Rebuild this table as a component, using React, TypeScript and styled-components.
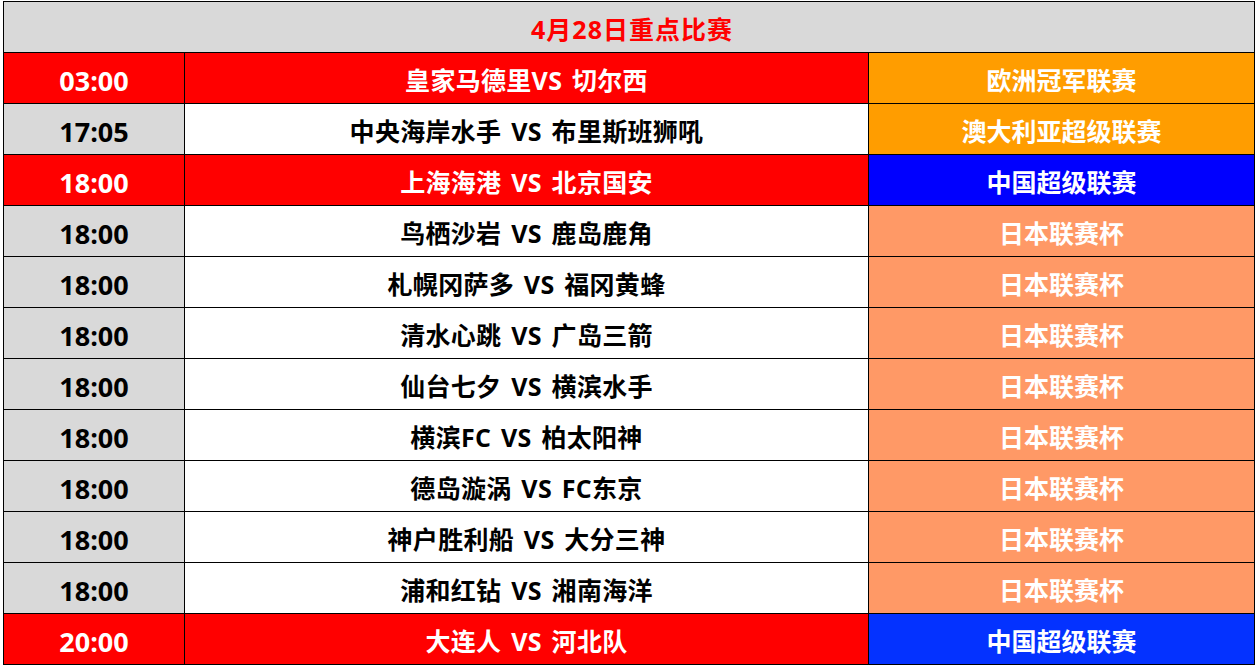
import React from "react";
import styled, { createGlobalStyle } from "styled-components";

const Global = createGlobalStyle`
  html, body { margin: 0; padding: 0; background: #ffffff; }
  body { padding: 1px 0 0 3px; }
  * { box-sizing: border-box; }
`;

const Table = styled.div`
  display: grid;
  grid-template-columns: 181px 684px 386px;
  grid-auto-rows: 51px;
  width: 1252px;
  border-top: 1px solid #000;
  border-left: 1px solid #000;
  font-family: "Open Sans", "Noto Sans CJK SC", sans-serif;
  font-weight: 700;
`;

const Cell = styled.div<{ $bg: string; $fg: string }>`
  display: flex;
  align-items: center;
  justify-content: center;
  padding-top: 5px;
  background: ${(p) => p.$bg};
  color: ${(p) => p.$fg};
  border-right: 1px solid #000;
  border-bottom: 1px solid #000;
  font-size: 25px;
  white-space: pre;
  line-height: 1;
`;

const TimeCell = styled(Cell)`
  font-size: 27px;
`;

const MatchCell = styled(Cell)`
  word-spacing: 3px;
  letter-spacing: 0.3px;
`;

const Header = styled(Cell)`
  grid-column: 1 / span 3;
  font-size: 25px;
  padding-top: 4px;
  padding-left: 6px;
  letter-spacing: 1px;
`;

type Row = { time: string; match: string; league: string; hot: boolean; lc: string };

const ORANGE = "#FF9D00";
const SALMON = "#FF9966";
const BLUE1 = "#0000FF";
const BLUE2 = "#0432FF";

const rows: Row[] = [
  { time: "03:00", match: "皇家马德里VS 切尔西", league: "欧洲冠军联赛", hot: true, lc: ORANGE },
  { time: "17:05", match: "中央海岸水手 VS 布里斯班狮吼", league: "澳大利亚超级联赛", hot: false, lc: ORANGE },
  { time: "18:00", match: "上海海港 VS 北京国安", league: "中国超级联赛", hot: true, lc: BLUE1 },
  { time: "18:00", match: "鸟栖沙岩 VS 鹿岛鹿角", league: "日本联赛杯", hot: false, lc: SALMON },
  { time: "18:00", match: "札幌冈萨多 VS 福冈黄蜂", league: "日本联赛杯", hot: false, lc: SALMON },
  { time: "18:00", match: "清水心跳 VS 广岛三箭", league: "日本联赛杯", hot: false, lc: SALMON },
  { time: "18:00", match: "仙台七夕 VS 横滨水手", league: "日本联赛杯", hot: false, lc: SALMON },
  { time: "18:00", match: "横滨FC VS 柏太阳神", league: "日本联赛杯", hot: false, lc: SALMON },
  { time: "18:00", match: "德岛漩涡 VS FC东京", league: "日本联赛杯", hot: false, lc: SALMON },
  { time: "18:00", match: "神户胜利船 VS 大分三神", league: "日本联赛杯", hot: false, lc: SALMON },
  { time: "18:00", match: "浦和红钻 VS 湘南海洋", league: "日本联赛杯", hot: false, lc: SALMON },
  { time: "20:00", match: "大连人 VS 河北队", league: "中国超级联赛", hot: true, lc: BLUE2 },
];

export default function App() {
  return (
    <>
      <Global />
      <Table>
        <Header $bg="#D9D9D9" $fg="#FF0000">4月28日重点比赛</Header>
        {rows.map((r, i) => (
          <React.Fragment key={i}>
            <TimeCell $bg={r.hot ? "#FF0000" : "#D9D9D9"} $fg={r.hot ? "#FFFFFF" : "#000000"}>{r.time}</TimeCell>
            <MatchCell $bg={r.hot ? "#FF0000" : "#FFFFFF"} $fg={r.hot ? "#FFFFFF" : "#000000"}>{r.match}</MatchCell>
            <Cell $bg={r.lc} $fg="#FFFFFF">{r.league}</Cell>
          </React.Fragment>
        ))}
      </Table>
    </>
  );
}
